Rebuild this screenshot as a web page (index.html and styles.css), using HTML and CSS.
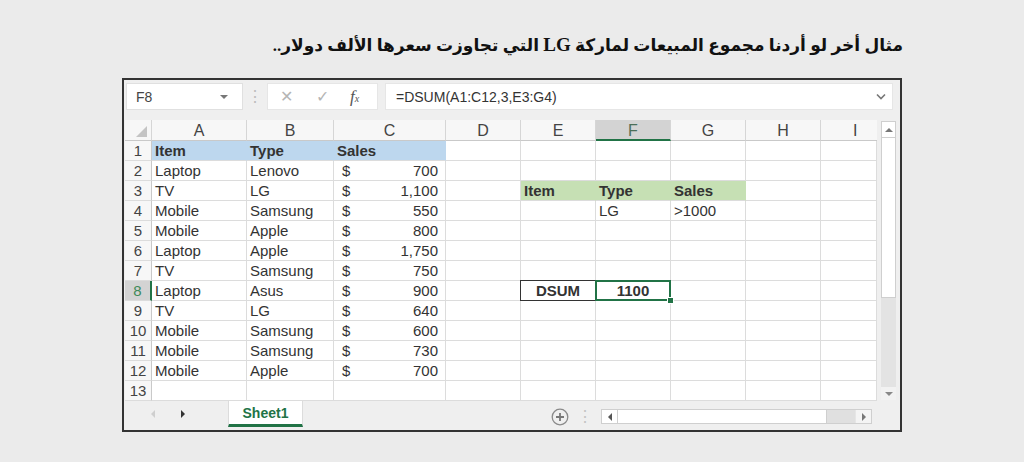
FILE: index.html
```html
<!DOCTYPE html>
<html lang="ar">
<head>
<meta charset="utf-8">
<title>DSUM</title>
<link rel="stylesheet" href="styles.css">
</head>
<body>
<div class="title" dir="rtl">مثال أخر لو أردنا مجموع المبيعات لماركة <span class="latin">LG</span> التي تجاوزت سعرها الألف دولار..</div>
<div class="window">
  <div class="fbar">
    <div class="namebox"><span>F8</span><span class="caret"></span></div>
    <div class="vdots">⋮</div>
    <div class="fxbox"><span class="x">✕</span><span class="ok">✓</span><span class="fx">f<sub>x</sub></span></div>
    <div class="finput"><span>=DSUM(A1:C12,3,E3:G4)</span><span class="chev">
      <svg width="10" height="7" viewBox="0 0 10 7"><path d="M1 1.5 L5 5.5 L9 1.5" fill="none" stroke="#777" stroke-width="1.6"/></svg></span></div>
  </div>
  <div class="sheet">
    <div class="grid">
      <div class="ch corner"></div><div class="ch">A</div><div class="ch">B</div><div class="ch">C</div><div class="ch">D</div><div class="ch">E</div><div class="ch sel">F</div><div class="ch">G</div><div class="ch">H</div><div class="ch lastc">I</div>

      <div class="rn">1</div><div class="blue b">Item</div><div class="blue b">Type</div><div class="blue b">Sales</div><div></div><div></div><div></div><div></div><div></div><div></div>
      <div class="rn">2</div><div>Laptop</div><div>Lenovo</div><div class="m"><span>$</span><span>700</span></div><div></div><div></div><div></div><div></div><div></div><div></div>
      <div class="rn">3</div><div>TV</div><div>LG</div><div class="m"><span>$</span><span>1,100</span></div><div></div><div class="green b">Item</div><div class="green b">Type</div><div class="green b">Sales</div><div></div><div></div>
      <div class="rn">4</div><div>Mobile</div><div>Samsung</div><div class="m"><span>$</span><span>550</span></div><div></div><div></div><div>LG</div><div>&gt;1000</div><div></div><div></div>
      <div class="rn">5</div><div>Mobile</div><div>Apple</div><div class="m"><span>$</span><span>800</span></div><div></div><div></div><div></div><div></div><div></div><div></div>
      <div class="rn">6</div><div>Laptop</div><div>Apple</div><div class="m"><span>$</span><span>1,750</span></div><div></div><div></div><div></div><div></div><div></div><div></div>
      <div class="rn">7</div><div>TV</div><div>Samsung</div><div class="m"><span>$</span><span>750</span></div><div></div><div></div><div></div><div></div><div></div><div></div>
      <div class="rn rsel">8</div><div>Laptop</div><div>Asus</div><div class="m"><span>$</span><span>900</span></div><div></div><div class="boxed b ctr">DSUM</div><div class="active b ctr">1100</div><div></div><div></div><div></div>
      <div class="rn">9</div><div>TV</div><div>LG</div><div class="m"><span>$</span><span>640</span></div><div></div><div></div><div></div><div></div><div></div><div></div>
      <div class="rn">10</div><div>Mobile</div><div>Samsung</div><div class="m"><span>$</span><span>600</span></div><div></div><div></div><div></div><div></div><div></div><div></div>
      <div class="rn">11</div><div>Mobile</div><div>Samsung</div><div class="m"><span>$</span><span>730</span></div><div></div><div></div><div></div><div></div><div></div><div></div>
      <div class="rn">12</div><div>Mobile</div><div>Apple</div><div class="m"><span>$</span><span>700</span></div><div></div><div></div><div></div><div></div><div></div><div></div>
      <div class="rn">13</div><div></div><div></div><div></div><div></div><div></div><div></div><div></div><div></div><div></div>
    </div>
    <div class="vscroll">
      <div class="vbtn"><span class="tri up"></span></div>
      <div class="vthumb"></div>
      <div class="vtrack"></div>
      <div class="vbtn dn"><span class="tri down"></span></div>
    </div>
  </div>
  <div class="tabbar">
    <div class="nav"><span class="tri left"></span><span class="tri right"></span></div>
    <div class="tab">Sheet1</div>
    <div class="spacer"></div>
    <div class="plus">
      <svg width="18" height="18" viewBox="0 0 18 18"><circle cx="9" cy="9" r="7.8" fill="none" stroke="#8a8a8a" stroke-width="1.3"/><path d="M9 5 V13 M5 9 H13" stroke="#777" stroke-width="1.8"/></svg>
    </div>
    <div class="hdots">⋮</div>
    <div class="hscroll">
      <div class="hbtn"><span class="tri left dark"></span></div>
      <div class="hthumb"></div>
      <div class="htrack"></div>
      <div class="hbtn rb"><span class="tri right lite"></span></div>
    </div>
  </div>
</div>
</body>
</html>
```
FILE: styles.css
```css
body {
  margin: 0;
  background: #ebebeb;
  font-family: "Liberation Sans", Arial, sans-serif;
}

.title {
  margin-left: 122px;
  width: 781px;
  height: 78px;
  box-sizing: border-box;
  padding-top: 34px;
  line-height: 22px;
  text-align: right;
  font-family: "Liberation Serif", "DejaVu Sans", serif;
  font-weight: bold;
  font-size: 17px;
  color: #111;
  white-space: nowrap;
}
.title .latin {
  font-family: "Liberation Serif", serif;
  font-size: 19px;
}

.window {
  margin-left: 122px;
  width: 780px;
  height: 354px;
  box-sizing: border-box;
  border: 2px solid #333;
  background: #efefef;
}

/* formula bar */
.fbar {
  display: flex;
  align-items: flex-start;
  height: 40px;
  box-sizing: border-box;
  padding: 3px 7px 0 2px;
}
.namebox {
  width: 117px;
  height: 27px;
  box-sizing: border-box;
  background: #fff;
  border: 1px solid #e0e0e0;
  display: flex;
  align-items: center;
  justify-content: space-between;
  padding: 0 14px 0 9px;
  font-size: 14px;
  color: #444;
}
.caret {
  width: 0;
  height: 0;
  border-left: 4px solid transparent;
  border-right: 4px solid transparent;
  border-top: 4px solid #777;
}
.vdots {
  width: 24px;
  text-align: center;
  color: #bdbdbd;
  font-size: 16px;
  line-height: 27px;
}
.fxbox {
  width: 111px;
  height: 27px;
  box-sizing: border-box;
  background: #fff;
  border: 1px solid #e6e6e6;
  display: flex;
  align-items: center;
  padding-left: 12px;
  color: #b5b5b5;
  font-size: 16px;
}
.fxbox .x { width: 36px; }
.fxbox .ok { width: 34px; }
.fxbox .fx {
  font-family: "Liberation Serif", serif;
  font-style: italic;
  font-size: 17px;
  color: #555;
}
.fxbox .fx sub { font-size: 10px; vertical-align: baseline; }
.finput {
  margin-left: 7px;
  flex: 1;
  height: 27px;
  box-sizing: border-box;
  background: #fff;
  border: 1px solid #e6e6e6;
  display: flex;
  align-items: center;
  justify-content: space-between;
  padding: 0 6px 0 10px;
  font-size: 14px;
  color: #333;
}
.chev { display: flex; }

/* sheet */
.sheet {
  display: flex;
  height: 281px;
}
.grid {
  margin-left: 1px;
  display: grid;
  grid-template-columns: 27px 95px 87px 112px 75px 75px 75px 75px 75px 56px;
  grid-template-rows: 21px repeat(13, 20px);
  background: #fff;
}
.grid > div {
  box-sizing: border-box;
  border-right: 1px solid #dcdcdc;
  border-bottom: 1px solid #dcdcdc;
  font-size: 15px;
  line-height: 19px;
  color: #333;
  padding-left: 3px;
  white-space: nowrap;
}
.grid > .ch {
  background: #f7f7f7;
  border-right-color: #d6d6d6;
  border-bottom-color: #c9c9c9;
  text-align: center;
  padding: 0;
  font-size: 16px;
  line-height: 21px;
  color: #444;
}
.grid > .ch.lastc { text-align: left; padding-left: 32px; border-right: none; }
.grid > .ch.sel {
  background: #d3d3d3;
  border-bottom: 2px solid #217346;
  color: #4b6f58;
}
.grid > .corner { position: relative; }
.corner::after {
  content: "";
  position: absolute;
  right: 4px;
  bottom: 3px;
  width: 0;
  height: 0;
  border-left: 11px solid transparent;
  border-bottom: 11px solid #c4c4c4;
}
.grid > .rn {
  background: #f7f7f7;
  border-right-color: #c9c9c9;
  text-align: center;
  padding: 0;
  color: #444;
}
.grid > .rn.rsel {
  background: #d3d3d3;
  border-right: 2px solid #217346;
  color: #3f8a5a;
}
.grid > .blue { background: #bdd7ee; border-right-color: #bdd7ee; }
.grid > .green { background: #c6e0b4; border-right-color: #c6e0b4; }
.grid > .b { font-weight: bold; }
.grid > .m {
  display: flex;
  justify-content: space-between;
  padding: 0 7px 0 8px;
}
.grid > .ctr { text-align: center; padding: 0; }
.grid > .boxed, .grid > .active { position: relative; }
.boxed::after {
  content: "";
  position: absolute;
  left: -1px;
  top: -1px;
  right: -1px;
  bottom: -1px;
  border: 1px solid #333;
}
.active::after {
  content: "";
  position: absolute;
  left: -1px;
  top: -1px;
  right: -1px;
  bottom: -1px;
  border: 2px solid #217346;
}
.active::before {
  content: "";
  position: absolute;
  right: -4px;
  bottom: -4px;
  width: 5px;
  height: 5px;
  background: #217346;
  border: 1px solid #fff;
  z-index: 2;
}

/* vertical scrollbar */
.vscroll {
  margin: 1px 4px 0 4px;
  width: 15px;
  height: 279px;
  display: flex;
  flex-direction: column;
  background: #e3e3e3;
}
.vbtn {
  height: 17px;
  background: #fff;
  border: 1px solid #cfcfcf;
  box-sizing: border-box;
  display: flex;
  align-items: center;
  justify-content: center;
}
.vbtn.dn { height: 13px; background: #f2f2f2; border: none; }
.vthumb {
  height: 160px;
  background: #fff;
  border: 1px solid #cfcfcf;
  border-top: none;
  box-sizing: border-box;
}
.vtrack { flex: 1; }

.tri { display: block; width: 0; height: 0; }
.tri.up { border-left: 4px solid transparent; border-right: 4px solid transparent; border-bottom: 4px solid #777; }
.tri.down { border-left: 4px solid transparent; border-right: 4px solid transparent; border-top: 4px solid #888; }
.tri.left { border-top: 4px solid transparent; border-bottom: 4px solid transparent; border-right: 4px solid #cfcfcf; }
.tri.right { border-top: 4px solid transparent; border-bottom: 4px solid transparent; border-left: 4px solid #333; }
.tri.left.dark { border-right-color: #555; }
.tri.right.lite { border-left-color: #777; }

/* tab bar */
.tabbar {
  display: flex;
  align-items: flex-start;
  height: 29px;
  background: #efefef;
}
.nav {
  width: 104px;
  height: 26px;
  display: flex;
  align-items: center;
  padding-left: 27px;
  box-sizing: border-box;
  gap: 26px;
}
.tab {
  width: 75px;
  height: 26px;
  box-sizing: border-box;
  background: #fff;
  border-bottom: 3px solid #217346;
  border-left: 1px solid #dcdcdc;
  border-right: 1px solid #dcdcdc;
  text-align: center;
  font-weight: bold;
  font-size: 14px;
  line-height: 24px;
  color: #217346;
}
.spacer { width: 248px; }
.plus { margin-top: 7px; display: flex; }
.hdots {
  width: 32px;
  text-align: center;
  color: #c4c4c4;
  font-size: 16px;
  line-height: 31px;
}
.hscroll {
  margin-top: 8px;
  width: 271px;
  height: 15px;
  box-sizing: border-box;
  border: 1px solid #cfcfcf;
  display: flex;
  background: #e0e0e0;
}
.hbtn {
  width: 15px;
  background: #fff;
  display: flex;
  align-items: center;
  justify-content: center;
}
.hbtn.rb { background: #f4f4f4; border-left: 1px solid #e6e6e6; }
.hthumb {
  width: 210px;
  background: #fff;
  border: 1px solid #cfcfcf;
  border-top: none;
  border-bottom: none;
  box-sizing: border-box;
}
.htrack { flex: 1; }
```
